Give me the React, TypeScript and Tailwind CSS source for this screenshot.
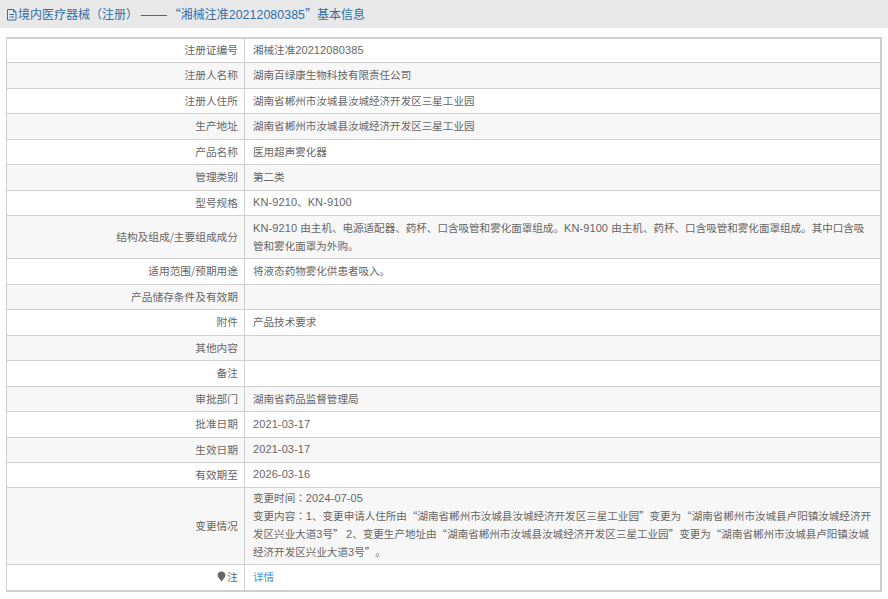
import React from "react";

type Row = { label: React.ReactNode; value?: React.ReactNode; h: string };

const L = ({ children }: { children: React.ReactNode }) => (
  <span className="font-['Liberation_Sans',sans-serif] text-[11px] tracking-[0.1px]">{children}</span>
);
const Colon = () => <span className="font-['Noto_Sans_CJK_TC',sans-serif]">：</span>;

const data: Row[] = [
  { label: "注册证编号", value: <>湘械注准<L>20212080385</L></>, h: "h-[24px]" },
  { label: "注册人名称", value: "湖南百绿康生物科技有限责任公司", h: "h-[26px]" },
  { label: "注册人住所", value: "湖南省郴州市汝城县汝城经济开发区三星工业园", h: "h-[25px]" },
  { label: "生产地址", value: "湖南省郴州市汝城县汝城经济开发区三星工业园", h: "h-[26px]" },
  { label: "产品名称", value: "医用超声雾化器", h: "h-[25px]" },
  { label: "管理类别", value: "第二类", h: "h-[26px]" },
  { label: "型号规格", value: <><L>KN-9210</L>、<L>KN-9100</L></>, h: "h-[25px]" },
  {
    label: "结构及组成/主要组成成分",
    value: (
      <>
        <L>KN-9210 </L>由主机、电源适配器、药杯、口含吸管和雾化面罩组成。<L>KN-9100 </L>由主机、药杯、口含吸管和雾化面罩组成。其中口含吸管和雾化面罩为外购。
      </>
    ),
    h: "h-[43px]",
  },
  { label: "适用范围/预期用途", value: "将液态药物雾化供患者吸入。", h: "h-[26px]" },
  { label: "产品储存条件及有效期", h: "h-[25px]" },
  { label: "附件", value: "产品技术要求", h: "h-[26px]" },
  { label: "其他内容", h: "h-[25px]" },
  { label: "备注", h: "h-[26px]" },
  { label: "审批部门", value: "湖南省药品监督管理局", h: "h-[25px]" },
  { label: "批准日期", value: <L>2021-03-17</L>, h: "h-[26px]" },
  { label: "生效日期", value: <L>2021-03-17</L>, h: "h-[25px]" },
  { label: "有效期至", value: <L>2026-03-16</L>, h: "h-[25px]" },
  {
    label: "变更情况",
    value: (
      <>
        变更时间<Colon /><L>2024-07-05</L>
        <br />
        变更内容<Colon /><L>1</L>、变更申请人住所由“湖南省郴州市汝城县汝城经济开发区三星工业园”变更为“湖南省郴州市汝城县卢阳镇汝城经济开发区兴业大道<L>3</L>号” <L>2</L>、变更生产地址由“湖南省郴州市汝城县汝城经济开发区三星工业园”变更为“湖南省郴州市汝城县卢阳镇汝城经济开发区兴业大道<L>3</L>号”。
      </>
    ),
    h: "h-[77px]",
  },
  {
    label: (
      <span className="inline-flex items-center">
        <svg width="9" height="11" viewBox="0 0 9 11" className="mr-[1px]">
          <path d="M4.5 0.5C2.2 0.5 0.6 2.2 0.6 4.2c0 2 2.2 3.6 3.9 6.3 1.7-2.7 3.9-4.3 3.9-6.3C8.4 2.2 6.8 0.5 4.5 0.5z" fill="#666" />
        </svg>
        注
      </span>
    ),
    value: <span className="text-[#4a90d9]">详情</span>,
    h: "h-[25px]",
  },
];

export default function App() {
  return (
    <div className="w-[888px] h-[599px] overflow-hidden bg-white text-[#666] text-[10.55px] leading-[17px] [text-spacing-trim:space-all] font-['Noto_Sans_CJK_SC',sans-serif]">
      <div className="h-[28px] bg-[#e8e8e8] flex items-center pl-[6px] text-[12px] text-[#2f6fa8]">
        <svg width="12" height="13" viewBox="0 0 12 13" className="shrink-0" fill="none" stroke="#2f6fa8" strokeWidth="1">
          <path d="M1.5 1.5h6l2.5 2.5v8h-8.5zM3.5 6.5h4.5M3.5 9h4.5M7.5 1.5v2.5h2.5" />
        </svg>
        <span>
          境内医疗器械（注册） <span className="font-['Liberation_Sans',sans-serif] text-[13px] mr-[2px]">——</span>“湘械注准<span className="font-['Liberation_Sans',sans-serif] text-[12.3px] tracking-[0.1px]">20212080385</span>”基本信息
        </span>
      </div>
      <div className="mt-[9px] ml-[6px] w-[876px] border-2 border-[#cfcfcf] border-l-[1px]">
        {data.map((r, i) => (
          <div
            key={i}
            className={`flex ${r.h} ${i % 2 === 1 ? "bg-[#f7f7f7]" : "bg-white"} ${i < data.length - 1 ? "border-b border-[#cfcfcf]" : ""}`}
          >
            <div className="w-[238px] shrink-0 flex items-center justify-end pr-[6px] pb-[2px] text-[10.7px] border-r border-[#cfcfcf]">{r.label}</div>
            <div className="flex-1 flex items-center pl-[8px] pr-[9px] pb-[2px]">
              <div>{r.value}</div>
            </div>
          </div>
        ))}
      </div>
    </div>
  );
}
